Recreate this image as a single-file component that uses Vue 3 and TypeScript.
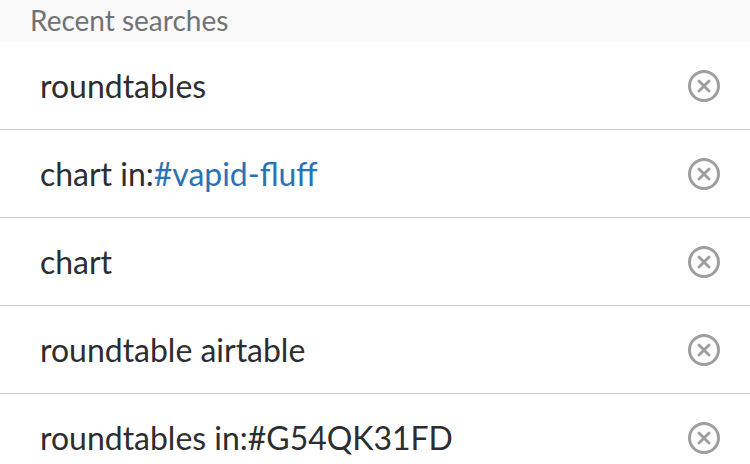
<script setup lang="ts">
interface Search {
  text: string
  channel?: string
}

const searches: Search[] = [
  { text: 'roundtables' },
  { text: 'chart in:', channel: '#vapid-fluff' },
  { text: 'chart' },
  { text: 'roundtable airtable' },
  { text: 'roundtables in:#G54QK31FD' },
]
</script>

<template>
  <main class="panel">
    <h2 class="heading">Recent searches</h2>
    <ul class="list">
      <li v-for="s in searches" :key="s.text" class="row">
        <span class="label">{{ s.text }}<span v-if="s.channel" class="channel">{{ s.channel }}</span></span>
        <button class="remove" type="button" aria-label="Remove">
          <svg width="32" height="32" viewBox="0 0 32 32" fill="none" stroke="#9e9ea0">
            <circle cx="16" cy="16" r="14.5" stroke-width="3" />
            <path d="M11 11 21 21M21 11 11 21" stroke-width="3" stroke-linecap="round" />
          </svg>
        </button>
      </li>
    </ul>
  </main>
</template>

<style>
body {
  background: #fff;
}
</style>

<style scoped>
.panel {
  height: 464px;
  overflow: hidden;
  background: #fff;
  font-family: Lato, sans-serif;
}
.heading {
  box-sizing: border-box;
  height: 42px;
  margin: 0;
  padding-left: 30px;
  background: #f9f9f9;
  color: #717274;
  font-size: 28px;
  font-weight: 400;
  line-height: 40px;
}
.list {
  margin: 0;
  padding: 0;
  list-style: none;
}
.row {
  display: flex;
  box-sizing: border-box;
  height: 88px;
  align-items: center;
  justify-content: space-between;
  padding: 0 30px 0 40px;
  border-bottom: 1px solid #c8c8c8;
}
.label {
  padding-top: 1px;
  color: #2c2d30;
  font-size: 31.96px;
  line-height: 40px;
  white-space: pre;
}
.channel {
  color: #2a72b5;
}
.remove {
  display: flex;
  padding: 0;
  border: 0;
  background: none;
}
</style>
